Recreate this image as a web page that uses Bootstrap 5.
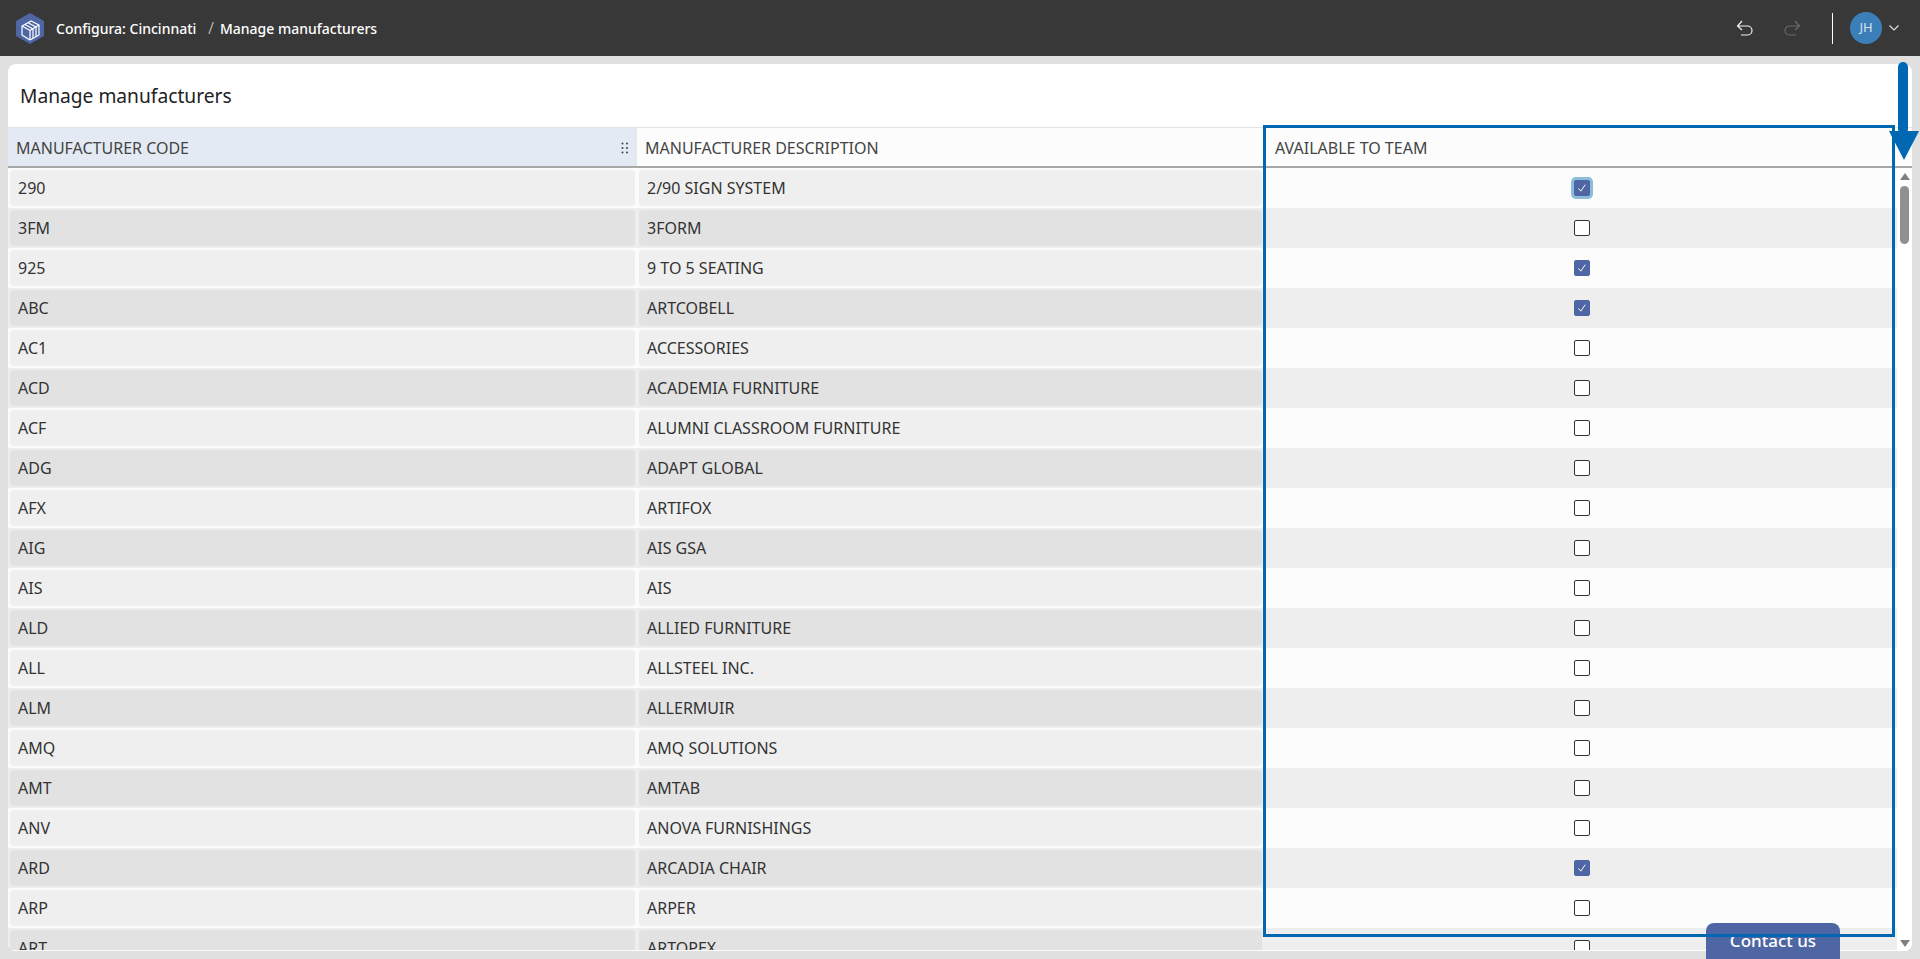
<!DOCTYPE html>
<html lang="en"><head><meta charset="utf-8"><title>Manage manufacturers</title>
<link href="https://cdn.jsdelivr.net/npm/bootstrap@5.3.0/dist/css/bootstrap.min.css" rel="stylesheet">
<style>
html,body{height:100%;overflow:hidden}
body{background:#e0e0e0;font-family:"Noto Sans",sans-serif;font-size:16px;color:#333}
.topbar{height:56px;background:#383838;color:#fff;padding-left:16px;padding-right:21px}
.crumb-a{margin-left:12px;font-size:14px;font-weight:500}
.crumb-sep{margin:0 6px 0 12px;font-size:16px;font-weight:300;color:#ddd}
.crumb-b{font-size:14px;font-weight:500}
.vdiv{width:1px;height:31px;background:#fff;margin:0 17px 0 31px}
.avatar{width:32px;height:32px;border-radius:50%;background:#3a7fb8;color:#d5e4f0;font-size:13px}
.redo-ic{margin-left:29px}
.chev{margin-left:7px}
.sheet{position:absolute;left:8px;top:64px;width:1904px;height:887px;background:#fff;border-radius:8px;overflow:hidden}
.sheet-title{height:63px;padding:19px 0 0 12px;font-size:19.2px;line-height:26px;color:#222;margin:0;font-weight:400}
.tbl{height:824px;background:#fcfcfc;border-top:1px solid #e4e4e4}
.hdr{height:40px;border-bottom:2px solid #a8a8a8;background:#fcfcfc;color:#444}
.hc1{width:629px;background:#e3eaf3;padding:1px 0 0 8px}
.hc2{width:627px;padding:1px 0 0 8px}
.hc3{flex:1;padding:1px 0 0 11px}
.grip{margin-right:8px}
.tr{height:40px;flex:none}
.tr:nth-child(even){background:#eee}
.tr:nth-child(even) .td{background:#e2e2e2}
.td{height:36px;margin:2px;padding-left:8px;border-radius:4px;background:#efefef;color:#333}
.c1{width:625px}
.c2{width:623px;margin-left:2px;margin-right:4px;padding-left:8px}
.c3{flex:1}
.tbody{height:783px;overflow:hidden;margin-top:-1px;padding-top:1px}
.main{width:1889px}
.sbar{width:15px;background:#fff}
.thumb{width:9px;height:58px;background:#909090;border-radius:5px;margin-top:6px}
.up{width:0;height:0;border-left:5px solid transparent;border-right:5px solid transparent;border-bottom:7px solid #808080;margin-top:5px}
.down{width:0;height:0;border-left:5px solid transparent;border-right:5px solid transparent;border-top:7px solid #808080;position:absolute;bottom:4px}
.form-check-input[type=checkbox]{width:16px;height:16px;margin:0;border:1.5px solid #333;border-radius:2px;background-color:#fff}
.form-check-input[type=checkbox]:checked{background-color:#4f66a5;border-color:#4f66a5;background-image:url("data:image/svg+xml,%3csvg xmlns='http://www.w3.org/2000/svg' viewBox='0 0 16 16'%3e%3cpath fill='none' stroke='%23fff' stroke-width='1' d='M4.5 8.5l2.3 2.6 4.5-6.4'/%3e%3c/svg%3e");background-size:16px}
.ringed{box-shadow:0 0 0 3px #8ebbdb}
.callout{position:absolute;left:1263px;top:125px;width:632px;height:812px;border:3px solid #0068b3;pointer-events:none;z-index:5}
.arrow{position:absolute;left:1888px;top:60px;z-index:6;display:block}
.contact{position:absolute;left:1706px;top:923px;width:134px;height:36px;background:#4f66a5;color:#fff;font-size:17px;font-weight:500;border:0;border-radius:8px 8px 0 0;padding:0;z-index:4}
.contact:hover{background:#4f66a5;color:#fff}
</style></head>
<body>
<nav class="topbar d-flex align-items-center">
<svg width="28" height="31" viewBox="0 0 28 31"><path d="M14 0L28 8V23L14 31L0 23V8Z" fill="#4f66a5"/><g fill="none" stroke="#fff" stroke-width="1.2" stroke-linejoin="round"><path d="M6 13L15 8L23 12V22L14 27L6 22Z"/><path d="M6 13L14 17.5V27"/><path d="M14 17.5L23 12"/><path d="M9 11.4L17 16V25.3"/><path d="M12 9.7L20 14V23.6"/></g></svg>
<span class="crumb-a">Configura: Cincinnati</span><span class="crumb-sep">/</span><span class="crumb-b">Manage manufacturers</span>
<div class="ms-auto d-flex align-items-center">
<svg width="18" height="18" viewBox="0 0 18 18" fill="none" stroke="#f2f2f2" stroke-width="1.2"><path d="M1.5 7H11.5A4.5 4.5 0 0 1 11.5 16H5M6 2L1.5 7L6 11"/></svg>
<svg class="redo-ic" width="18" height="18" viewBox="0 0 18 18" fill="none" stroke="#6b6b6b" stroke-width="1.2"><path d="M16.5 7H6.5A4.5 4.5 0 0 0 6.5 16H13M12 2L16.5 7L12 11"/></svg>
<div class="vdiv"></div>
<div class="avatar d-flex align-items-center justify-content-center">JH</div>
<svg class="chev" width="10" height="6" viewBox="0 0 10 6" fill="none" stroke="#e0e0e0" stroke-width="1.2"><path d="M.5.5L5 5L9.5.5"/></svg>
</div>
</nav>
<main class="sheet">
<h1 class="sheet-title">Manage manufacturers</h1>
<div class="tbl d-flex flex-column">
<div class="hdr d-flex">
<div class="hc1 d-flex align-items-center justify-content-between"><span>MANUFACTURER CODE</span><svg class="grip" width="8" height="12" fill="#444"><circle cx="1.5" cy="1.5" r="1"/><circle cx="6" cy="1.5" r="1"/><circle cx="1.5" cy="6" r="1"/><circle cx="6" cy="6" r="1"/><circle cx="1.5" cy="10.5" r="1"/><circle cx="6" cy="10.5" r="1"/></svg></div>
<div class="hc2 d-flex align-items-center">MANUFACTURER DESCRIPTION</div>
<div class="hc3 d-flex align-items-center">AVAILABLE TO TEAM</div>
</div>
<div class="d-flex flex-grow-1 overflow-hidden">
<div class="main tbody d-flex flex-column" id="rows"></div>
<div class="sbar d-flex flex-column align-items-center"><div class="up"></div><div class="thumb"></div><div class="down"></div></div>
</div>
</div>
</main>
<div class="callout"></div>
<svg class="arrow" width="32" height="102" viewBox="0 0 32 102"><rect x="10" y="2" width="10" height="72" rx="5" fill="#0068b3"/><path d="M1 71H31L16 100Z" fill="#0068b3"/></svg>
<button class="contact btn">Contact us</button>
<script>
const d=[["290","2/90 SIGN SYSTEM",1],["3FM","3FORM",0],["925","9 TO 5 SEATING",1],["ABC","ARTCOBELL",1],["AC1","ACCESSORIES",0],["ACD","ACADEMIA FURNITURE",0],["ACF","ALUMNI CLASSROOM FURNITURE",0],["ADG","ADAPT GLOBAL",0],["AFX","ARTIFOX",0],["AIG","AIS GSA",0],["AIS","AIS",0],["ALD","ALLIED FURNITURE",0],["ALL","ALLSTEEL INC.",0],["ALM","ALLERMUIR",0],["AMQ","AMQ SOLUTIONS",0],["AMT","AMTAB",0],["ANV","ANOVA FURNISHINGS",0],["ARD","ARCADIA CHAIR",1],["ARP","ARPER",0],["ART","ARTOPEX",0]];
document.getElementById('rows').innerHTML=d.map((r,i)=>`<div class="tr d-flex"><div class="td c1 d-flex align-items-center">${r[0]}</div><div class="td c2 d-flex align-items-center">${r[1]}</div><div class="c3 d-flex align-items-center justify-content-center"><input type="checkbox" class="form-check-input${i==0?' ringed':''}" ${r[2]?'checked':''} aria-label="Available to team"></div></div>`).join('');
</script>
<script src="https://cdn.jsdelivr.net/npm/bootstrap@5.3.0/dist/js/bootstrap.bundle.min.js"></script>
</body></html>
